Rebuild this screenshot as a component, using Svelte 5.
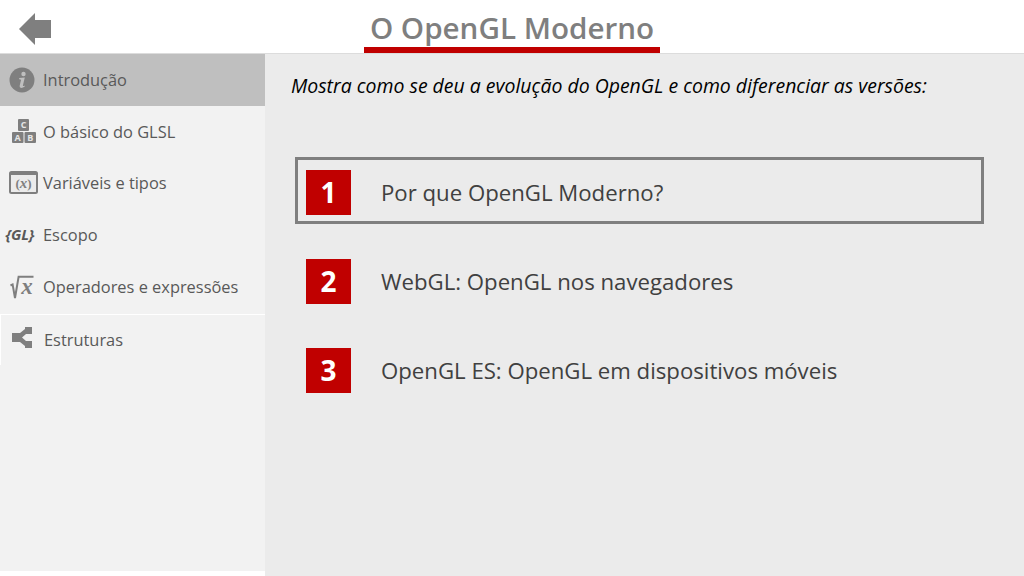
<script>
  const menu = [
    { label: "Introdução", icon: "info", active: true },
    { label: "O básico do GLSL", icon: "blocks" },
    { label: "Variáveis e tipos", icon: "vars" },
    { label: "Escopo", icon: "scope" },
    { label: "Operadores e expressões", icon: "sqrt" },
    { label: "Estruturas", icon: "tree", last: true }
  ];
  const topics = [
    { n: 1, text: "Por que OpenGL Moderno?", current: true },
    { n: 2, text: "WebGL: OpenGL nos navegadores" },
    { n: 3, text: "OpenGL ES: OpenGL em dispositivos móveis" }
  ];
</script>

<div class="page">
  <header>
    <button class="back" aria-label="Voltar">
      <svg width="32" height="32" viewBox="0 0 32 32"><path d="M0 16 L16 0 L16 7 L32 7 L32 25 L16 25 L16 32 Z" fill="#7f7f7f" /></svg>
    </button>
    <h1>O OpenGL Moderno</h1>
  </header>

  <div class="body">
    <aside>
      <nav>
        {#each menu as item}
          <div class="item" class:active={item.active} class:last={item.last}>
            <span class="icon">
              {#if item.icon === "info"}
                <svg width="26" height="26" viewBox="0 0 26 26">
                  <circle cx="13" cy="13" r="12.5" fill="#7f7f7f" />
                  <circle cx="14.5" cy="7" r="2.2" fill="#bfbfbf" />
                  <path d="M10.2 11 L15.8 10.4 L13.9 18.6 Q13.8 19.6 15.6 18.6 L15.8 19.6 Q13.4 21.2 11.6 20.8 Q10.3 20.4 10.7 18.6 L12.1 12.8 L10.2 12.3 Z" fill="#bfbfbf" />
                </svg>
              {:else if item.icon === "blocks"}
                <svg class="blocks" width="24" height="24" viewBox="0 0 24 24">
                  <rect x="6" y="0" width="11" height="12" rx="1" fill="#7f7f7f" />
                  <rect x="0" y="13" width="11.5" height="11" rx="1" fill="#7f7f7f" />
                  <rect x="12.5" y="13" width="11.5" height="11" rx="1" fill="#7f7f7f" />
                  <text x="11.5" y="9" text-anchor="middle">C</text>
                  <text x="5.7" y="21.8" text-anchor="middle">A</text>
                  <text x="18.2" y="21.8" text-anchor="middle">B</text>
                </svg>
              {:else if item.icon === "vars"}
                <svg class="vars" width="29" height="23" viewBox="0 0 29 23">
                  <rect x="1" y="1" width="27" height="21" rx="1.5" fill="#ebebeb" stroke="#7f7f7f" stroke-width="2" />
                  <rect x="1" y="1" width="27" height="3" fill="#7f7f7f" />
                  <text x="14.5" y="17" text-anchor="middle">(<tspan class="var">x</tspan>)</text>
                </svg>
              {:else if item.icon === "scope"}
                <span class="scope">&#123;GL&#125;</span>
              {:else if item.icon === "sqrt"}
                <svg class="sqrt" width="26" height="30" viewBox="0 0 26 30">
                  <path d="M1.5 14.5 L3.6 13.4 L6 27 L9.6 5.8 L24.5 5.8" fill="none" stroke="#7f7f7f" stroke-width="2" />
                  <text x="18" y="22.6" text-anchor="middle">x</text>
                </svg>
              {:else}
                <svg class="tree" width="20" height="21" viewBox="0 0 20 21">
                  <path d="M0 6 H8 L13 2 V0 H20 V7 H14 L10 10.5 L14 14 H20 V21 H13 V19 L8 15 H0 Z" fill="#7f7f7f" />
                </svg>
              {/if}
            </span>
            <span>{item.label}</span>
          </div>
        {/each}
      </nav>
    </aside>

    <main>
      <p class="intro">Mostra como se deu a evolução do OpenGL e como diferenciar as versões:</p>
      <ol>
        {#each topics as topic}
          <li class:current={topic.current}>
            <span class="num">{topic.n}</span>
            <span>{topic.text}</span>
          </li>
        {/each}
      </ol>
    </main>
  </div>
</div>

<style>
  :global(body) {
    background: #fff;
  }

  .page {
    width: 1024px;
    height: 576px;
    display: flex;
    flex-direction: column;
    overflow: hidden;
    font-family: "Open Sans", "Liberation Sans", sans-serif;
  }

  header {
    height: 53px;
    flex: none;
    display: grid;
    grid-template-columns: 1fr auto 1fr;
    border-bottom: 1px solid #dcdcdc;
    background: #fff;
  }

  .back {
    display: flex;
    align-items: flex-start;
    justify-self: start;
    width: 52px;
    height: 47px;
    padding: 13px 0 0 19px;
    border: 0;
    background: none;
  }

  h1 {
    grid-column: 2;
    margin: 0;
    padding: 8px 6px 0;
    border-bottom: 6px solid #c00000;
    font-size: 29.6px;
    line-height: 39px;
    font-weight: 600;
    color: #7f7f7f;
    white-space: nowrap;
  }

  .body {
    flex: 1;
    display: flex;
    min-height: 0;
    background: #ebebeb;
  }

  aside {
    width: 265px;
    flex: none;
    height: 517px;
    background: #f2f2f2;
    box-shadow: 0 5px 0 #fff;
  }

  .item {
    height: 51.6px;
    display: flex;
    align-items: center;
    font-size: 16.4px;
    color: #595959;
    white-space: nowrap;
  }

  .item.active {
    background: #bfbfbf;
  }

  .item.last {
    height: 49.6px;
    margin-top: 2px;
    border-top: 1px solid #fff;
    border-left: 1px solid #fff;
  }

  .icon {
    width: 43px;
    flex: none;
    display: flex;
    justify-content: center;
  }

  .blocks {
    margin-left: 5px;
  }

  .vars {
    margin-left: 3px;
  }

  .blocks text {
    font-size: 9px;
    font-weight: 700;
    fill: #e6e6e6;
  }

  .vars text {
    font-family: "Liberation Serif", serif;
    font-size: 13px;
    font-weight: 700;
    fill: #7f7f7f;
  }

  .vars .var {
    font-style: italic;
    font-size: 15px;
  }

  .scope {
    font-size: 15px;
    font-weight: 700;
    font-style: italic;
    color: #595959;
    margin-left: -3px;
    margin-top: -2px;
  }

  .sqrt text {
    font-family: "Liberation Serif", serif;
    font-size: 23px;
    font-weight: 700;
    font-style: italic;
    fill: #7f7f7f;
  }

  .tree {
    margin: -4px 0 0 -1px;
  }

  main {
    flex: 1;
    padding: 0 40px 0 26px;
  }

  .intro {
    margin: 19px 0 0;
    font-size: 19.47px;
    line-height: 25px;
    font-style: italic;
    color: #000;
    white-space: nowrap;
  }

  ol {
    list-style: none;
    margin: 59px 0 0 4px;
    padding: 0;
    display: flex;
    flex-direction: column;
    gap: 22px;
  }

  li {
    width: 689px;
    height: 67px;
    box-sizing: border-box;
    padding: 3px 0 0 8px;
    border: 3px solid transparent;
    display: flex;
    align-items: center;
    gap: 30px;
    font-size: 22.2px;
    color: #404040;
    white-space: nowrap;
  }

  li.current {
    border-color: #7f7f7f;
  }

  .num {
    width: 45px;
    height: 45px;
    flex: none;
    display: flex;
    align-items: center;
    justify-content: center;
    background: #c00000;
    color: #fff;
    font-size: 28px;
    font-weight: 700;
  }
</style>
